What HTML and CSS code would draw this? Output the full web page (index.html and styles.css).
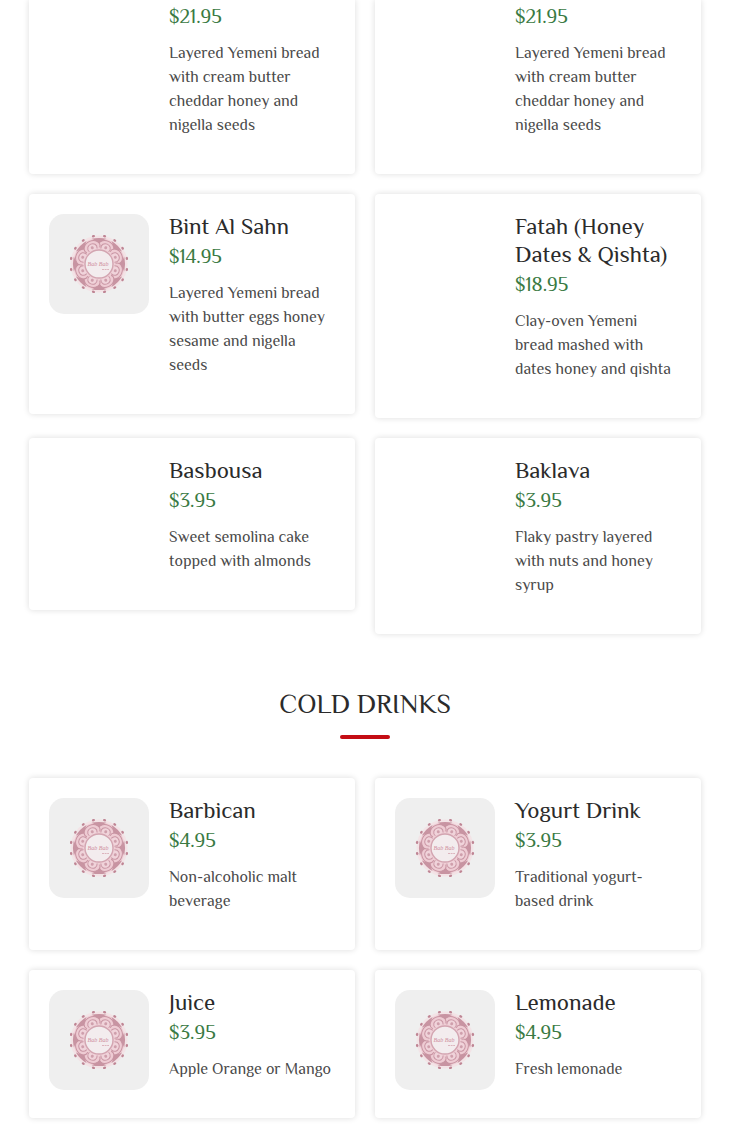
FILE: index.html
```html
<!DOCTYPE html>
<html lang="en">
<head>
    <meta charset="UTF-8">
    <meta name="viewport" content="width=device-width, initial-scale=1.0">
    <title>Menu</title>
    <link rel="stylesheet" href="styles.css">
</head>
<body>
    <!-- Shared logo drawing -->
    <svg class="sprite" aria-hidden="true">
        <defs>
            <ellipse id="dot" cx="0" cy="-28.4" rx="1.6" ry="1.2" />
            <g id="dots">
                <use href="#dot" transform="rotate(11.25)" />
                <use href="#dot" transform="rotate(33.75)" />
                <use href="#dot" transform="rotate(56.25)" />
                <use href="#dot" transform="rotate(78.75)" />
            </g>
            <g id="petal">
                <path d="M-7 -15C-10.5 -19 -6 -24.5 0 -24.5C6 -24.5 10.5 -19 7 -15" fill="#eecbd3" stroke="#c793a1" stroke-width="1" />
                <path d="M-4.2 -15C-6 -19 -3 -21.5 0 -21.5C3 -21.5 6 -19 4.2 -15" fill="#f0d3da" stroke="#c996a4" stroke-width="1" />
                <circle cx="0" cy="-17.6" r="1.5" fill="#cf9fac" />
            </g>
            <path id="wedge" d="M-7.5 -25.2Q0 -27 7.5 -25.2Q2.5 -23.5 0 -18.5Q-2.5 -23.5 -7.5 -25.2Z" fill="#c894a2" />
            <g id="quarter">
                <use href="#wedge" />
                <use href="#wedge" transform="rotate(45)" />
                <use href="#petal" transform="rotate(22.5)" />
                <use href="#petal" transform="rotate(67.5)" />
            </g>
            <symbol id="logo" viewBox="-30 -30 60 60">
                <circle r="28.5" fill="#f3e3e6" />
                <g fill="#bf8594">
                    <use href="#dots" />
                    <use href="#dots" transform="rotate(90)" />
                    <use href="#dots" transform="rotate(180)" />
                    <use href="#dots" transform="rotate(270)" />
                </g>
                <circle r="26" fill="#efcfd6" />
                <use href="#quarter" />
                <use href="#quarter" transform="rotate(90)" />
                <use href="#quarter" transform="rotate(180)" />
                <use href="#quarter" transform="rotate(270)" />
                <circle r="14" fill="#f3ecee" stroke="#d3a5b1" stroke-width="1.4" />
                <text class="logo-name" x="-1" y="2" text-anchor="middle">Bab Bab</text>
                <path d="M3 5.5H10" fill="none" stroke="#dcb4bd" stroke-width="1" stroke-dasharray="2 0.6" />
            </symbol>
        </defs>
    </svg>

    <main class="menu">
        <section class="menu-grid">
            <article class="card card-first">
                <div class="photo"></div>
                <div class="info">
                    <p class="price">$21.95</p>
                    <p class="desc">Layered Yemeni bread with cream butter cheddar honey and nigella seeds</p>
                </div>
            </article>
            <article class="card card-first">
                <div class="photo"></div>
                <div class="info">
                    <p class="price">$21.95</p>
                    <p class="desc">Layered Yemeni bread with cream butter cheddar honey and nigella seeds</p>
                </div>
            </article>
            <article class="card">
                <div class="photo photo-logo"><svg class="logo" aria-hidden="true"><use href="#logo" /></svg></div>
                <div class="info">
                    <h3>Bint Al Sahn</h3>
                    <p class="price">$14.95</p>
                    <p class="desc">Layered Yemeni bread with butter eggs honey sesame and nigella seeds</p>
                </div>
            </article>
            <article class="card">
                <div class="photo"></div>
                <div class="info">
                    <h3>Fatah (Honey Dates &amp; Qishta)</h3>
                    <p class="price">$18.95</p>
                    <p class="desc">Clay-oven Yemeni bread mashed with dates honey and qishta</p>
                </div>
            </article>
            <article class="card">
                <div class="photo"></div>
                <div class="info">
                    <h3>Basbousa</h3>
                    <p class="price">$3.95</p>
                    <p class="desc">Sweet semolina cake topped with almonds</p>
                </div>
            </article>
            <article class="card">
                <div class="photo"></div>
                <div class="info">
                    <h3>Baklava</h3>
                    <p class="price">$3.95</p>
                    <p class="desc">Flaky pastry layered with nuts and honey syrup</p>
                </div>
            </article>
        </section>

        <h2>COLD DRINKS</h2>

        <section class="menu-grid">
            <article class="card">
                <div class="photo photo-logo"><svg class="logo" aria-hidden="true"><use href="#logo" /></svg></div>
                <div class="info">
                    <h3>Barbican</h3>
                    <p class="price">$4.95</p>
                    <p class="desc">Non-alcoholic malt beverage</p>
                </div>
            </article>
            <article class="card">
                <div class="photo photo-logo"><svg class="logo" aria-hidden="true"><use href="#logo" /></svg></div>
                <div class="info">
                    <h3>Yogurt Drink</h3>
                    <p class="price">$3.95</p>
                    <p class="desc">Traditional yogurt-based drink</p>
                </div>
            </article>
            <article class="card">
                <div class="photo photo-logo"><svg class="logo" aria-hidden="true"><use href="#logo" /></svg></div>
                <div class="info">
                    <h3>Juice</h3>
                    <p class="price">$3.95</p>
                    <p class="desc">Apple Orange or Mango</p>
                </div>
            </article>
            <article class="card">
                <div class="photo photo-logo"><svg class="logo" aria-hidden="true"><use href="#logo" /></svg></div>
                <div class="info">
                    <h3>Lemonade</h3>
                    <p class="price">$4.95</p>
                    <p class="desc">Fresh lemonade</p>
                </div>
            </article>
        </section>
    </main>
</body>
</html>
```

FILE: styles.css
```css
body {
    margin: 0;
    background-color: #fff;
    font-family: Philosopher, Lato, sans-serif;
    color: #2b2b2b;
}
.sprite {
    display: block;
    width: 0;
    height: 0;
}
.menu {
    padding: 0 29px 6px;
}
.menu-grid {
    display: grid;
    grid-template-columns: 1fr 1fr;
    gap: 20px;
    align-items: start;
}
.card {
    display: flex;
    gap: 20px;
    padding: 20px;
    background: #fff;
    border-radius: 4px;
    box-shadow: 0 0 6px rgba(0, 0, 0, 0.14);
}
.card-first {
    padding-top: 3px;
    border-radius: 0 0 4px 4px;
}
.photo {
    flex: 0 0 100px;
    height: 100px;
    border-radius: 15px;
}
.photo-logo {
    display: flex;
    align-items: center;
    justify-content: center;
    background: #efefef;
}
.logo {
    width: 60px;
    height: 60px;
}
.logo-name {
    font-family: "Liberation Serif", serif;
    font-style: italic;
    font-size: 6px;
    fill: #cf8f9e;
}
.info {
    flex: 1;
    min-width: 0;
    margin-top: -2px;
}
h2 {
    margin: 52px 0 39px;
    font-size: 27px;
    font-weight: 400;
    line-height: 36px;
    text-align: center;
}
h2::after {
    content: "";
    display: block;
    width: 50px;
    height: 4px;
    margin: 13px auto 0;
    border-radius: 2px;
    background: #c40d14;
}
h3 {
    margin: 0 0 1px;
    font-size: 23px;
    font-weight: 400;
    line-height: 28px;
}
.price {
    margin: 0 0 10px;
    font-size: 20px;
    line-height: 30px;
    color: #3a7a43;
}
.desc {
    margin: 0 0 17px;
    padding-right: 3px;
    font-size: 16px;
    line-height: 24px;
    color: #4a4a4a;
}
```
